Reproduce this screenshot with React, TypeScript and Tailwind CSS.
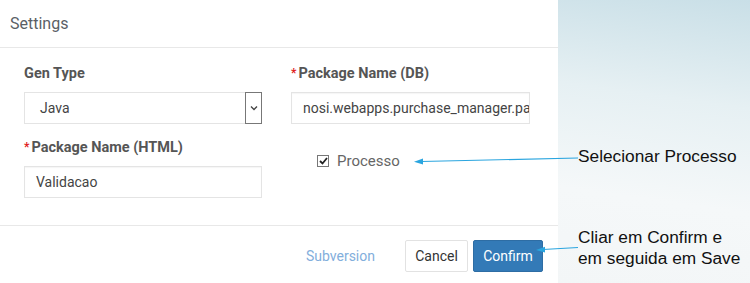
import React from 'react';

const font = { fontFamily: 'Roboto, "Noto Sans", sans-serif' };

function Label({ text, required }: { text: string; required?: boolean }) {
  return (
    <div className="flex items-center h-[20px] mb-2 text-[14.5px] font-bold text-[#555]">
      {required && <span className="text-[#e02020] text-[12px] mr-[2px] -mt-[2px]">*</span>}
      <span>{text}</span>
    </div>
  );
}

function TextBox({ value }: { value: string }) {
  return (
    <div className="h-[32px] border border-[#e4e4e4] shadow-[inset_0_1px_1px_rgba(0,0,0,0.04)] bg-white pl-[11px] flex items-center overflow-hidden whitespace-nowrap text-[14px] text-[#444]">
      {value}
    </div>
  );
}

export default function App() {
  return (
    <div
      className="relative w-[750px] h-[283px] flex bg-[linear-gradient(188deg,#c9dfe7_0%,#e6f0f3_28%,#f5f8f9_55%,#f3f6f7_80%,#eef2f4_100%)] overflow-hidden"
      style={font}
    >
      {/* dialog */}
      <div className="w-[558px] h-full bg-white flex flex-col">
        <div className="h-[48px] border-b border-[#e8e8e8] flex items-center pl-[10px] text-[16px] text-[#5a5f66] shrink-0">
          Settings
        </div>

        <div className="grid grid-cols-[238px_239px] gap-x-[29px] pl-[24px] pt-[16px] pb-[27px]">
          <div>
            <Label text="Gen Type" />
            <div className="h-[32px] border border-[#e4e4e4] bg-white flex items-center text-[14px] text-[#444]">
              <span className="flex-1 pl-[15px]">Java</span>
              <span className="w-[17px] h-[32px] -mr-px -my-px border border-[#777] flex items-center justify-center">
                <svg width="8" height="6" viewBox="0 0 8 6">
                  <path d="M1 1.5 L4 4.5 L7 1.5" fill="none" stroke="#444" strokeWidth="1.3" />
                </svg>
              </span>
            </div>
          </div>
          <div>
            <Label text="Package Name (DB)" required />
            <TextBox value="nosi.webapps.purchase_manager.pages" />
          </div>

          <div className="mt-[14px]">
            <Label text="Package Name (HTML)" required />
            <div className="mt-px">
              <TextBox value="Validacao" />
            </div>
          </div>
          <div className="mt-[14px] pl-[26px] pt-[17px]">
            <div className="flex items-center gap-[8px] h-[12px]">
              <span className="w-[12px] h-[12px] border border-[#777] bg-white flex items-center justify-center">
                <svg width="9" height="8" viewBox="0 0 9 8">
                  <path d="M1 4 L3.5 6.5 L8 1" fill="none" stroke="#222" strokeWidth="1.8" />
                </svg>
              </span>
              <span className="text-[15px] text-[#666] mt-[1px]">Processo</span>
            </div>
          </div>
        </div>

        <div className="border-t border-[#e8e8e8] pt-[14px] pr-[15px] flex justify-end items-center">
          <span className="text-[14px] text-[#82aedc] mr-[30px]">Subversion</span>
          <button className="h-[32px] w-[63px] border border-[#e2e2e2] bg-white text-[14px] text-[#333] rounded-[2px] mr-[5px]">
            Cancel
          </button>
          <button className="h-[32px] w-[70px] bg-[#337ab7] border border-[#2e6da4] text-[14px] text-white rounded-[2px]">
            Confirm
          </button>
        </div>
      </div>

      {/* annotations */}
      <svg className="absolute left-0 top-0" width="750" height="283">
        <line x1="578" y1="158" x2="421" y2="161.5" stroke="#2aa5df" strokeWidth="1.2" />
        <path d="M414 161.7 L423 158.6 L423 164.6 Z" fill="#2aa5df" />
        <line x1="578" y1="247.5" x2="543" y2="249.5" stroke="#2aa5df" strokeWidth="1.2" />
        <path d="M536 250 L545 246.8 L545 252.6 Z" fill="#2aa5df" />
      </svg>
      <div
        className="absolute left-[578px] top-[146px] text-[17.3px] leading-[21px] text-[#111]"
        style={{ fontFamily: '"Liberation Sans", Arial, sans-serif' }}
      >
        Selecionar Processo
      </div>
      <div
        className="absolute left-[578px] top-[227px] text-[17.3px] leading-[21px] text-[#111]"
        style={{ fontFamily: '"Liberation Sans", Arial, sans-serif' }}
      >
        Cliar em Confirm e
        <br />
        em seguida em Save
      </div>
    </div>
  );
}
